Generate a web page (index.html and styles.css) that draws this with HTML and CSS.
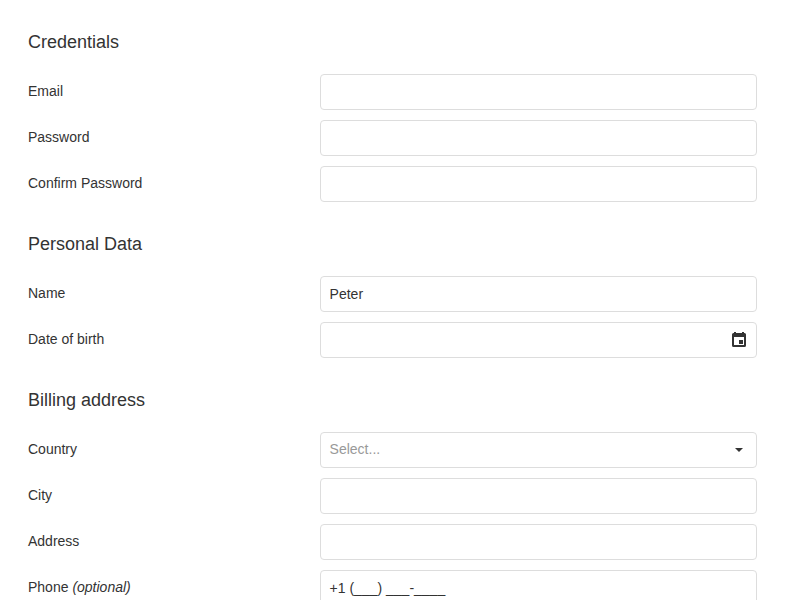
FILE: index.html
```html
<!DOCTYPE html>
<html lang="en">
<head>
<meta charset="utf-8">
<title>Registration</title>
<link rel="stylesheet" href="styles.css">
</head>
<body>
<form class="form">
  <section class="group">
    <h2 class="caption">Credentials</h2>
    <div class="row"><span class="label">Email</span><div class="field"></div></div>
    <div class="row"><span class="label">Password</span><div class="field"></div></div>
    <div class="row"><span class="label">Confirm Password</span><div class="field"></div></div>
  </section>
  <section class="group">
    <h2 class="caption">Personal Data</h2>
    <div class="row"><span class="label">Name</span><div class="field"><span class="value">Peter</span></div></div>
    <div class="row"><span class="label">Date of birth</span><div class="field">
      <svg class="icon" viewBox="0 0 18 18"><path fill-rule="evenodd" d="M4 1h2v1h6V1h2v1h.5A1.500 1.500 0 0 1 16 3.500v11a1.500 1.500 0 0 1-1.500 1.500h-11A1.500 1.500 0 0 1 2 14.500v-11A1.500 1.500 0 0 1 3.500 2H4zM4 6v8h10V6zM9 9h4v4H9z"/></svg>
    </div></div>
  </section>
  <section class="group">
    <h2 class="caption">Billing address</h2>
    <div class="row"><span class="label">Country</span><div class="field"><span class="placeholder">Select...</span>
      <svg class="icon" viewBox="0 0 18 18"><path d="M5 7h8l-4 4z"/></svg>
    </div></div>
    <div class="row"><span class="label">City</span><div class="field"></div></div>
    <div class="row"><span class="label">Address</span><div class="field"></div></div>
    <div class="row"><span class="label">Phone <em>(optional)</em></span><div class="field"><span class="value">+1 (___) ___-____</span></div></div>
  </section>
</form>
</body>
</html>
```
FILE: styles.css
```css
* { box-sizing: border-box; }
html, body { height: 100%; overflow: hidden; }
body {
  margin: 0;
  background: #fff;
  color: #333;
  font: 14px/20px "Liberation Sans", Arial, sans-serif;
}
.form { height: 100%; overflow: hidden; padding: 30px 28px 0; }
.group { margin-bottom: 30px; }
.caption {
  margin: 0 0 20px;
  font-size: 18px;
  font-weight: 400;
  line-height: 24px;
}
.row {
  display: grid;
  grid-template-columns: 291.600px 1fr;
  align-items: start;
  margin-bottom: 10px;
}
.label { padding-top: 7px; }
.field {
  display: flex;
  align-items: center;
  height: 36px;
  padding: 0 8px 0 9px;
  border: 1px solid #ddd;
  border-radius: 4px;
}
.placeholder { padding-bottom: 2px; color: #999; }
.icon {
  width: 18px;
  height: 18px;
  margin-left: auto;
  fill: #333;
}
```
